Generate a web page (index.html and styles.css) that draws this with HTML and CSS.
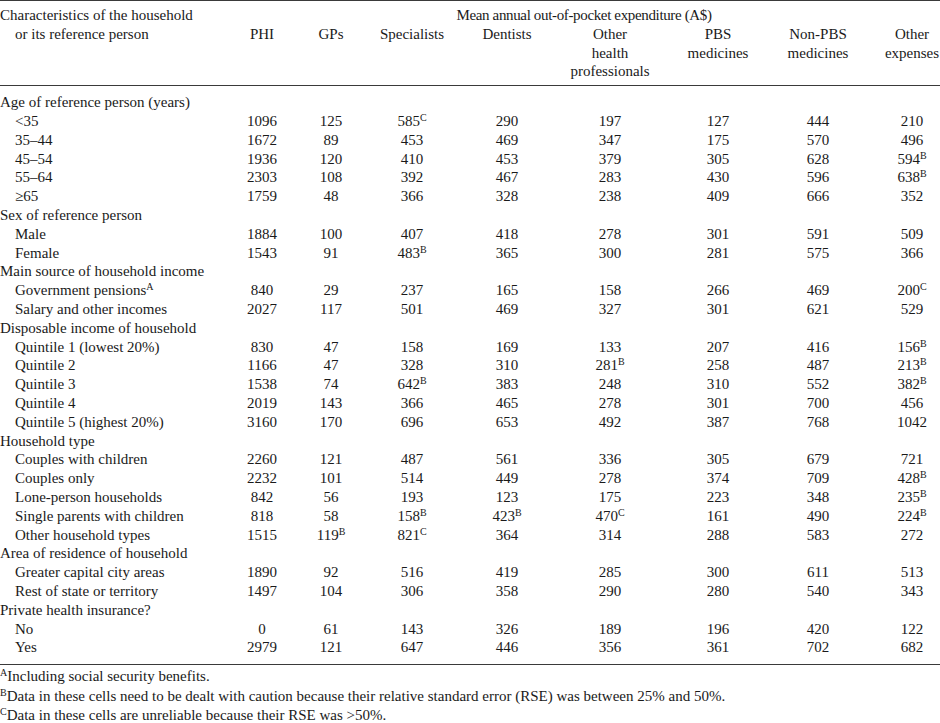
FILE: index.html
```html
<!DOCTYPE html>
<html lang="en">
<head>
<meta charset="utf-8">
<title>Mean annual out-of-pocket expenditure</title>
<link rel="stylesheet" href="styles.css">
</head>
<body>
<table class="tbl">
  <colgroup>
    <col class="c-label"><col class="c-phi"><col class="c-gp"><col class="c-spec"><col class="c-dent"><col class="c-oth"><col class="c-pbs"><col class="c-npbs"><col class="c-exp">
  </colgroup>
  <thead>
    <tr class="h1">
      <th class="lbl" rowspan="2"><span class="hl">Characteristics of the household</span><span class="hl ind">or its reference person</span></th>
      <th class="span" colspan="8">Mean annual out-of-pocket expenditure (A$)</th>
    </tr>
    <tr class="h2">
      <th>PHI</th>
      <th>GPs</th>
      <th>Specialists</th>
      <th>Dentists</th>
      <th>Other<br>health<br>professionals</th>
      <th>PBS<br>medicines</th>
      <th>Non-PBS<br>medicines</th>
      <th class="last">Other<br>expenses</th>
    </tr>
  </thead>
  <tbody>
    <tr class="cat first"><td colspan="9">Age of reference person (years)</td></tr>
    <tr><td class="sub">&lt;35</td><td>1096</td><td>125</td><td>585<sup>C</sup></td><td>290</td><td>197</td><td>127</td><td>444</td><td class="last">210</td></tr>
    <tr><td class="sub">35–44</td><td>1672</td><td>89</td><td>453</td><td>469</td><td>347</td><td>175</td><td>570</td><td class="last">496</td></tr>
    <tr><td class="sub">45–54</td><td>1936</td><td>120</td><td>410</td><td>453</td><td>379</td><td>305</td><td>628</td><td class="last">594<sup>B</sup></td></tr>
    <tr><td class="sub">55–64</td><td>2303</td><td>108</td><td>392</td><td>467</td><td>283</td><td>430</td><td>596</td><td class="last">638<sup>B</sup></td></tr>
    <tr><td class="sub">≥65</td><td>1759</td><td>48</td><td>366</td><td>328</td><td>238</td><td>409</td><td>666</td><td class="last">352</td></tr>
    <tr class="cat"><td colspan="9">Sex of reference person</td></tr>
    <tr><td class="sub">Male</td><td>1884</td><td>100</td><td>407</td><td>418</td><td>278</td><td>301</td><td>591</td><td class="last">509</td></tr>
    <tr><td class="sub">Female</td><td>1543</td><td>91</td><td>483<sup>B</sup></td><td>365</td><td>300</td><td>281</td><td>575</td><td class="last">366</td></tr>
    <tr class="cat"><td colspan="9">Main source of household income</td></tr>
    <tr><td class="sub">Government pensions<sup>A</sup></td><td>840</td><td>29</td><td>237</td><td>165</td><td>158</td><td>266</td><td>469</td><td class="last">200<sup>C</sup></td></tr>
    <tr><td class="sub">Salary and other incomes</td><td>2027</td><td>117</td><td>501</td><td>469</td><td>327</td><td>301</td><td>621</td><td class="last">529</td></tr>
    <tr class="cat"><td colspan="9">Disposable income of household</td></tr>
    <tr><td class="sub">Quintile 1 (lowest 20%)</td><td>830</td><td>47</td><td>158</td><td>169</td><td>133</td><td>207</td><td>416</td><td class="last">156<sup>B</sup></td></tr>
    <tr><td class="sub">Quintile 2</td><td>1166</td><td>47</td><td>328</td><td>310</td><td>281<sup>B</sup></td><td>258</td><td>487</td><td class="last">213<sup>B</sup></td></tr>
    <tr><td class="sub">Quintile 3</td><td>1538</td><td>74</td><td>642<sup>B</sup></td><td>383</td><td>248</td><td>310</td><td>552</td><td class="last">382<sup>B</sup></td></tr>
    <tr><td class="sub">Quintile 4</td><td>2019</td><td>143</td><td>366</td><td>465</td><td>278</td><td>301</td><td>700</td><td class="last">456</td></tr>
    <tr><td class="sub">Quintile 5 (highest 20%)</td><td>3160</td><td>170</td><td>696</td><td>653</td><td>492</td><td>387</td><td>768</td><td class="last">1042</td></tr>
    <tr class="cat"><td colspan="9">Household type</td></tr>
    <tr><td class="sub">Couples with children</td><td>2260</td><td>121</td><td>487</td><td>561</td><td>336</td><td>305</td><td>679</td><td class="last">721</td></tr>
    <tr><td class="sub">Couples only</td><td>2232</td><td>101</td><td>514</td><td>449</td><td>278</td><td>374</td><td>709</td><td class="last">428<sup>B</sup></td></tr>
    <tr><td class="sub">Lone-person households</td><td>842</td><td>56</td><td>193</td><td>123</td><td>175</td><td>223</td><td>348</td><td class="last">235<sup>B</sup></td></tr>
    <tr><td class="sub">Single parents with children</td><td>818</td><td>58</td><td>158<sup>B</sup></td><td>423<sup>B</sup></td><td>470<sup>C</sup></td><td>161</td><td>490</td><td class="last">224<sup>B</sup></td></tr>
    <tr><td class="sub">Other household types</td><td>1515</td><td>119<sup>B</sup></td><td>821<sup>C</sup></td><td>364</td><td>314</td><td>288</td><td>583</td><td class="last">272</td></tr>
    <tr class="cat"><td colspan="9">Area of residence of household</td></tr>
    <tr><td class="sub">Greater capital city areas</td><td>1890</td><td>92</td><td>516</td><td>419</td><td>285</td><td>300</td><td>611</td><td class="last">513</td></tr>
    <tr><td class="sub">Rest of state or territory</td><td>1497</td><td>104</td><td>306</td><td>358</td><td>290</td><td>280</td><td>540</td><td class="last">343</td></tr>
    <tr class="cat"><td colspan="9">Private health insurance?</td></tr>
    <tr><td class="sub">No</td><td>0</td><td>61</td><td>143</td><td>326</td><td>189</td><td>196</td><td>420</td><td class="last">122</td></tr>
    <tr class="lastrow"><td class="sub">Yes</td><td>2979</td><td>121</td><td>647</td><td>446</td><td>356</td><td>361</td><td>702</td><td class="last">682</td></tr>
  </tbody>
</table>
<div class="notes">
  <p class="note"><sup>A</sup>Including social security benefits.</p>
  <p class="note"><sup>B</sup>Data in these cells need to be dealt with caution because their relative standard error (RSE) was between 25% and 50%.</p>
  <p class="note"><sup>C</sup>Data in these cells are unreliable because their RSE was &gt;50%.</p>
</div>
</body>
</html>
```
FILE: styles.css
```css
html, body {
  margin: 0;
  padding: 0;
  background: #ffffff;
}

body {
  width: 940px;
  font-family: "Liberation Serif", "Times New Roman", serif;
  font-size: 15px;
  line-height: 18.8px;
  color: #1a1a1a;
}

.tbl {
  width: 940px;
  table-layout: fixed;
  border-collapse: collapse;
  border-top: 1px solid #3a3a3a;
  border-bottom: 1px solid #3a3a3a;
}

.c-label { width: 228px; }
.c-phi { width: 68px; }
.c-gp { width: 70px; }
.c-spec { width: 92px; }
.c-dent { width: 98px; }
.c-oth { width: 108px; }
.c-pbs { width: 108px; }
.c-npbs { width: 92px; }
.c-exp { width: 76px; }

.tbl th,
.tbl td {
  padding: 0;
  font-weight: normal;
  text-align: center;
  vertical-align: top;
  white-space: nowrap;
}

.tbl thead {
  border-bottom: 1px solid #3a3a3a;
}

.h1 th {
  padding-top: 5px;
}

.h2 th {
  padding-bottom: 4px;
}

.tbl th.lbl {
  text-align: left;
}

.hl {
  display: block;
}

.hl.ind {
  padding-left: 15px;
}

.tbl th.span {
  letter-spacing: -0.35px;
}

.tbl .last {
  padding-left: 20px;
}

.tbl td.sub {
  text-align: left;
  padding-left: 15px;
}

.cat td {
  text-align: left;
}

.first td {
  padding-top: 7px;
}

.lastrow td {
  padding-bottom: 7px;
}

sup {
  font-size: 10px;
  line-height: 0;
  vertical-align: 5px;
  letter-spacing: 0;
}

.notes {
  padding-top: 2px;
}

.note {
  margin: 0;
  line-height: 19.5px;
}
```
